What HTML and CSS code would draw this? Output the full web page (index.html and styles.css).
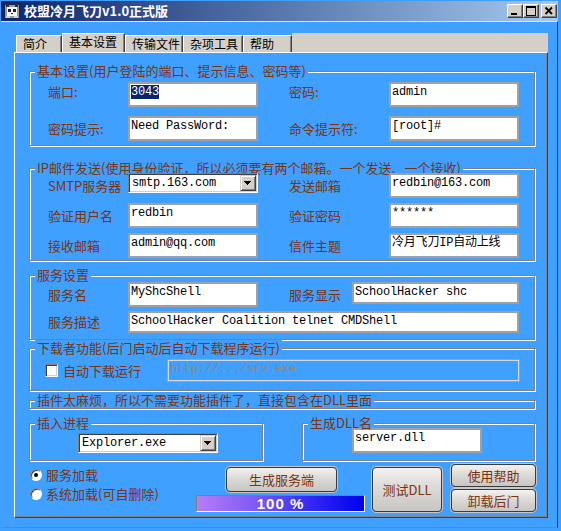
FILE: index.html
```html
<!DOCTYPE html>
<html lang="zh">
<head>
<meta charset="utf-8">
<title>校盟冷月飞刀v1.0正式版</title>
<link rel="stylesheet" href="styles.css">
</head>
<body>
<div class="window">
  <div class="titlebar">
    <svg class="appicon" viewBox="0 0 16 16" shape-rendering="crispEdges">
      <rect x="1" y="2" width="14" height="13" fill="#9a9a9a"/>
      <rect x="2" y="1" width="3" height="3" fill="#303030"/>
      <rect x="11" y="1" width="3" height="3" fill="#303030"/>
      <rect x="3" y="4" width="10" height="9" fill="#f4f4f4"/>
      <rect x="4" y="6" width="3" height="3" fill="#202020"/>
      <rect x="9" y="6" width="3" height="3" fill="#202020"/>
      <rect x="7" y="10" width="2" height="1" fill="#202020"/>
      <rect x="2" y="13" width="4" height="2" fill="#d0d0d0"/>
      <rect x="10" y="13" width="4" height="2" fill="#d0d0d0"/>
    </svg>
    <span class="title">校盟冷月飞刀v1.0正式版</span>
    <div class="caption-btns">
      <span class="cbtn"><svg viewBox="0 0 14 12" shape-rendering="crispEdges"><rect x="3" y="8" width="6" height="2" fill="#000"/></svg></span>
      <span class="cbtn"><svg viewBox="0 0 14 12" shape-rendering="crispEdges"><rect x="2" y="1" width="9" height="9" fill="none" stroke="#000" stroke-width="1" transform="translate(0.5 0.5)"/><rect x="2" y="1" width="10" height="2" fill="#000"/></svg></span>
      <span class="cbtn close"><svg viewBox="0 0 14 12"><path d="M3.5 2.5 L10 9 M10 2.5 L3.5 9" stroke="#000" stroke-width="1.8"/></svg></span>
    </div>
  </div>

  <div class="frame">
    <div class="tabstrip">
      <span class="tab t1">简介</span>
      <span class="tab t2 active">基本设置</span>
      <span class="tab t3">传输文件</span>
      <span class="tab t4">杂项工具</span>
      <span class="tab t5">帮助</span>
      <span class="tabfill"></span>
    </div>

    <div class="panel">
      <div class="group g1">
        <div class="legend">基本设置(用户登陆的端口、提示信息、密码等)</div>
        <div class="grid grid1">
          <span class="lbl up">端口:</span>
          <div class="field"><span class="sel">3043</span></div>
          <span class="lbl up">密码:</span>
          <div class="field">admin</div>
          <span class="lbl">密码提示:</span>
          <div class="field">Need PassWord:</div>
          <span class="lbl">命令提示符:</span>
          <div class="field">[root]#</div>
        </div>
      </div>

      <div class="group g2">
        <div class="legend">IP邮件发送(使用身份验证，所以必须要有两个邮箱。一个发送、一个接收)</div>
        <div class="grid grid2">
          <span class="lbl">SMTP服务器</span>
          <div class="combo smtp"><span class="ctext">smtp.163.com</span><span class="drop"><svg viewBox="0 0 14 14" shape-rendering="crispEdges"><path d="M3 5 H10 L6.5 9 Z" fill="#000"/></svg></span></div>
          <span class="lbl">发送邮箱</span>
          <div class="field">redbin@163.com</div>
          <span class="lbl">验证用户名</span>
          <div class="field">redbin</div>
          <span class="lbl">验证密码</span>
          <div class="field">******</div>
          <span class="lbl">接收邮箱</span>
          <div class="field">admin@qq.com</div>
          <span class="lbl">信件主题</span>
          <div class="field">冷月飞刀IP自动上线</div>
        </div>
      </div>

      <div class="group g3">
        <div class="legend">服务设置</div>
        <div class="grid grid3">
          <span class="lbl">服务名</span>
          <div class="field">MyShcShell</div>
          <span class="lbl">服务显示</span>
          <div class="field short w167">SchoolHacker shc</div>
          <span class="lbl">服务描述</span>
          <div class="field short wide">SchoolHacker Coalition telnet CMDShell</div>
        </div>
      </div>

      <div class="group g4">
        <div class="legend">下载者功能(后门启动后自动下载程序运行)</div>
        <div class="row4">
          <span class="chk"></span>
          <span class="lbl chk-lbl">自动下载运行</span>
          <div class="field disabled">http://.../srv.exe</div>
        </div>
      </div>

      <div class="group g5">
        <div class="legend">插件太麻烦，所以不需要功能插件了，直接包含在DLL里面</div>
      </div>

      <div class="row6">
        <div class="group g6">
          <div class="legend">插入进程</div>
          <div class="combo explorer"><span class="ctext">Explorer.exe</span><span class="drop"><svg viewBox="0 0 14 14" shape-rendering="crispEdges"><path d="M3 5 H10 L6.5 9 Z" fill="#000"/></svg></span></div>
        </div>
        <div class="group g7">
          <div class="legend">生成DLL名</div>
          <div class="field dllname">server.dll</div>
        </div>
      </div>

      <div class="bottom">
        <div class="radios">
          <div class="radio-row"><span class="radio on"></span><span class="lbl">服务加载</span></div>
          <div class="radio-row"><span class="radio"></span><span class="lbl">系统加载(可自删除)</span></div>
        </div>
        <div class="midcol">
          <div class="btn btn-gen">生成服务端</div>
          <div class="progress">100 %</div>
        </div>
        <div class="btn btn-test">测试DLL</div>
        <div class="rightcol">
          <div class="btn btn-small">使用帮助</div>
          <div class="btn btn-small">卸载后门</div>
        </div>
      </div>
    </div>
  </div>
</div>
</body>
</html>
```

FILE: styles.css
```css
* { box-sizing: border-box; }
html, body { margin: 0; padding: 0; }
body {
  background: #40A0FF;
  width: 561px;
  height: 531px;
  overflow: hidden;
  font-family: "Noto Sans CJK SC", "Noto Sans", sans-serif;
}
.window { width: 561px; height: 531px; padding: 1px 0 0 1px; }

/* title bar */
.titlebar {
  width: 557px;
  height: 20px;
  display: flex;
  align-items: center;
  background: linear-gradient(to right, #0A246A, #A6CAF0);
}
.appicon { width: 16px; height: 16px; margin-left: 3px; flex: none; }
.title {
  margin-left: 4px;
  color: #fff;
  font-weight: bold;
  font-size: 13px;
  line-height: 16px;
  white-space: nowrap;
}
.caption-btns { margin-left: auto; margin-right: 1px; display: flex; }
.cbtn {
  width: 16px;
  height: 14px;
  background: #D4D0C8;
  border: 1px solid;
  border-color: #fff #404040 #404040 #fff;
  box-shadow: inset -1px -1px 0 #808080;
  display: flex;
}
.cbtn svg { width: 14px; height: 12px; }
.cbtn.close { margin-left: 2px; }

/* client frame */
.frame {
  width: 557px;
  height: 507px;
  border-top: 1px solid #cfe6ff;
  border-right: 1px solid #303030;
  border-bottom: 1px solid #808080;
  padding: 11px 0 0 13px;
}

/* tabs */
.tabstrip {
  width: 534px;
  height: 19px;
  display: flex;
  align-items: flex-end;
  padding-left: 2px;
}
.tab {
  height: 17px;
  background: #D4D0C8;
  border-left: 1px solid #fff;
  border-top: 1px solid #fff;
  border-right: 1px solid #404040;
  box-shadow: inset -1px 0 0 #808080;
  font-size: 12px;
  line-height: 15px;
  color: #000;
  padding-left: 6px;
  white-space: nowrap;
  flex: none;
}
.tab.active { height: 19px; }
.t1 { width: 46px; }
.t2 { width: 63px; }
.t3 { width: 58px; }
.t4 { width: 60px; }
.t5 { width: 49px; }
.tabfill { flex: 1; align-self: stretch; background: #D4D0C8; }

/* panel */
.panel {
  width: 534px;
  height: 466px;
  border: 1px solid;
  border-color: #fff #404040 #404040 #fff;
  box-shadow: inset -1px -1px 0 #808080;
  padding: 18px 0 0 14px;
}

/* group boxes */
.group {
  width: 506px;
  border: 1px solid #808080;
  box-shadow: inset 1px 1px 0 #fff, 1px 1px 0 #fff;
}
.legend {
  width: max-content;
  height: 10px;
  margin: -9px 0 -1px 5px;
  padding: 0 2px;
  background: #40A0FF;
  color: #7B3311;
  font-size: 13px;
  line-height: 15px;
  white-space: nowrap;
}
.g1 { height: 75px; }
.g2 { height: 93px; margin-top: 22px; }
.g3 { height: 65px; margin-top: 14px; }
.g4 { height: 43px; margin-top: 8px; }
.g5 { height: 9px; margin-top: 9px; }
.row6 { display: flex; gap: 39px; margin-top: 14px; }
.g6 { width: 234px; height: 38px; }
.g7 { width: 233px; height: 38px; }

.lbl {
  color: #7B3311;
  font-size: 13px;
  line-height: 16px;
  white-space: nowrap;
}
.lbl.up { align-self: start; margin-top: 2px; }

.grid { display: grid; align-items: center; padding-left: 18px; }
.grid1 {
  grid-template-columns: 80px 161px 100px 130px;
  grid-auto-rows: 25px;
  row-gap: 9px;
  padding-top: 10px;
}
.grid2 {
  grid-template-columns: 80px 161px 100px 130px;
  grid-auto-rows: 25px;
  row-gap: 5px;
  padding-top: 4px;
}
.grid3 {
  grid-template-columns: 80px 161px 63px 167px;
  grid-template-rows: 25px 22px;
  row-gap: 4px;
  padding-top: 6px;
}

/* text fields */
.field {
  width: 130px;
  height: 25px;
  background: #fff;
  border: 2px solid #a0a0a0;
  padding: 0 1px;
  font-family: "Liberation Mono", "Noto Sans CJK SC", monospace;
  font-size: 12px;
  letter-spacing: -0.2px;
  line-height: 16px;
  color: #000;
  white-space: nowrap;
  overflow: hidden;
}
.field.short { height: 22px; align-self: start; }
.field.w167 { width: 167px; }
.field.wide { width: 391px; grid-column: span 3; }
.sel { background: #0A246A; color: #fff; }
.field.disabled {
  width: 353px;
  height: 23px;
  margin-left: auto;
  background: transparent;
  border: 1px solid #a0a0a0;
  box-shadow: inset 0 0 0 1px #d8d8d8;
  padding: 1px 2px 0;
  color: #8e8a78;
}
.field.dllname { margin: 4px 0 0 49px; }

/* combo boxes */
.combo {
  display: flex;
  width: 130px;
  height: 20px;
  background: #fff;
  border: 1px solid;
  border-color: #808080 #fff #fff #808080;
  box-shadow: inset 1px 1px 0 #404040, inset -1px -1px 0 #D4D0C8;
  padding: 1px;
  align-self: start;
}
.combo .ctext {
  flex: 1;
  padding-left: 2px;
  font-family: "Liberation Mono", monospace;
  font-size: 12px;
  letter-spacing: -0.2px;
  line-height: 16px;
  color: #000;
  white-space: nowrap;
  overflow: hidden;
}
.combo .drop {
  width: 16px;
  height: 16px;
  flex: none;
  background: #D4D0C8;
  border: 1px solid;
  border-color: #D4D0C8 #404040 #404040 #D4D0C8;
  box-shadow: inset 1px 1px 0 #fff, inset -1px -1px 0 #808080;
  display: flex;
}
.combo .drop svg { width: 14px; height: 14px; }
.combo.explorer { width: 140px; margin: 9px 0 0 48px; }

/* checkbox row */
.row4 {
  display: flex;
  align-items: center;
  padding: 10px 14px 0 15px;
}
.chk {
  width: 13px;
  height: 13px;
  flex: none;
  background: #fff;
  border: 1px solid;
  border-color: #808080 #fff #fff #808080;
  box-shadow: inset 1px 1px 0 #404040, inset -1px -1px 0 #D4D0C8;
}
.chk-lbl { margin-left: 5px; }

/* bottom area */
.bottom { display: flex; height: 48px; margin-top: 3px; }
.radios { width: 166px; margin-left: 1px; padding-top: 1px; }
.radio-row { display: flex; align-items: center; height: 19px; gap: 4px; }
.radio {
  width: 12px;
  height: 12px;
  flex: none;
  border-radius: 50%;
  background: #fff;
  border: 1px solid;
  border-color: #808080 #fff #fff #808080;
  box-shadow: inset 1px 1px 0 #404040;
  display: flex;
  align-items: center;
  justify-content: center;
}
.radio.on::after {
  content: "";
  width: 4px;
  height: 4px;
  border-radius: 50%;
  background: #000;
}
.midcol { width: 169px; padding-top: 3px; }
.btn {
  display: flex;
  align-items: center;
  justify-content: center;
  border: 1px solid #3a3a3a;
  border-radius: 4px;
  background: linear-gradient(#f3f2f0, #dcdad6 45%, #c8c6c2);
  box-shadow: 0 0 0 1px #c8c8c8;
  color: #7B3311;
  font-size: 13px;
  line-height: 16px;
  white-space: nowrap;
}
.btn-gen { width: 111px; height: 25px; margin-left: 30px; }
.progress {
  width: 169px;
  height: 17px;
  margin-top: 3px;
  border: 1px solid;
  border-color: #808080 #fff #fff #808080;
  background: linear-gradient(to right, #B77CF6, #7F5AF6 35%, #3A2CF4 65%, #0000EE);
  color: #fff;
  font-family: "Liberation Sans", sans-serif;
  font-weight: bold;
  font-size: 15px;
  letter-spacing: 1px;
  line-height: 15px;
  display: flex;
  align-items: center;
  justify-content: center;
}
.btn-test { width: 70px; height: 45px; margin: 3px 0 0 7px; }
.rightcol {
  width: 85px;
  margin-left: 9px;
  display: flex;
  flex-direction: column;
  gap: 2px;
}
.btn-small { height: 23px; }
```
